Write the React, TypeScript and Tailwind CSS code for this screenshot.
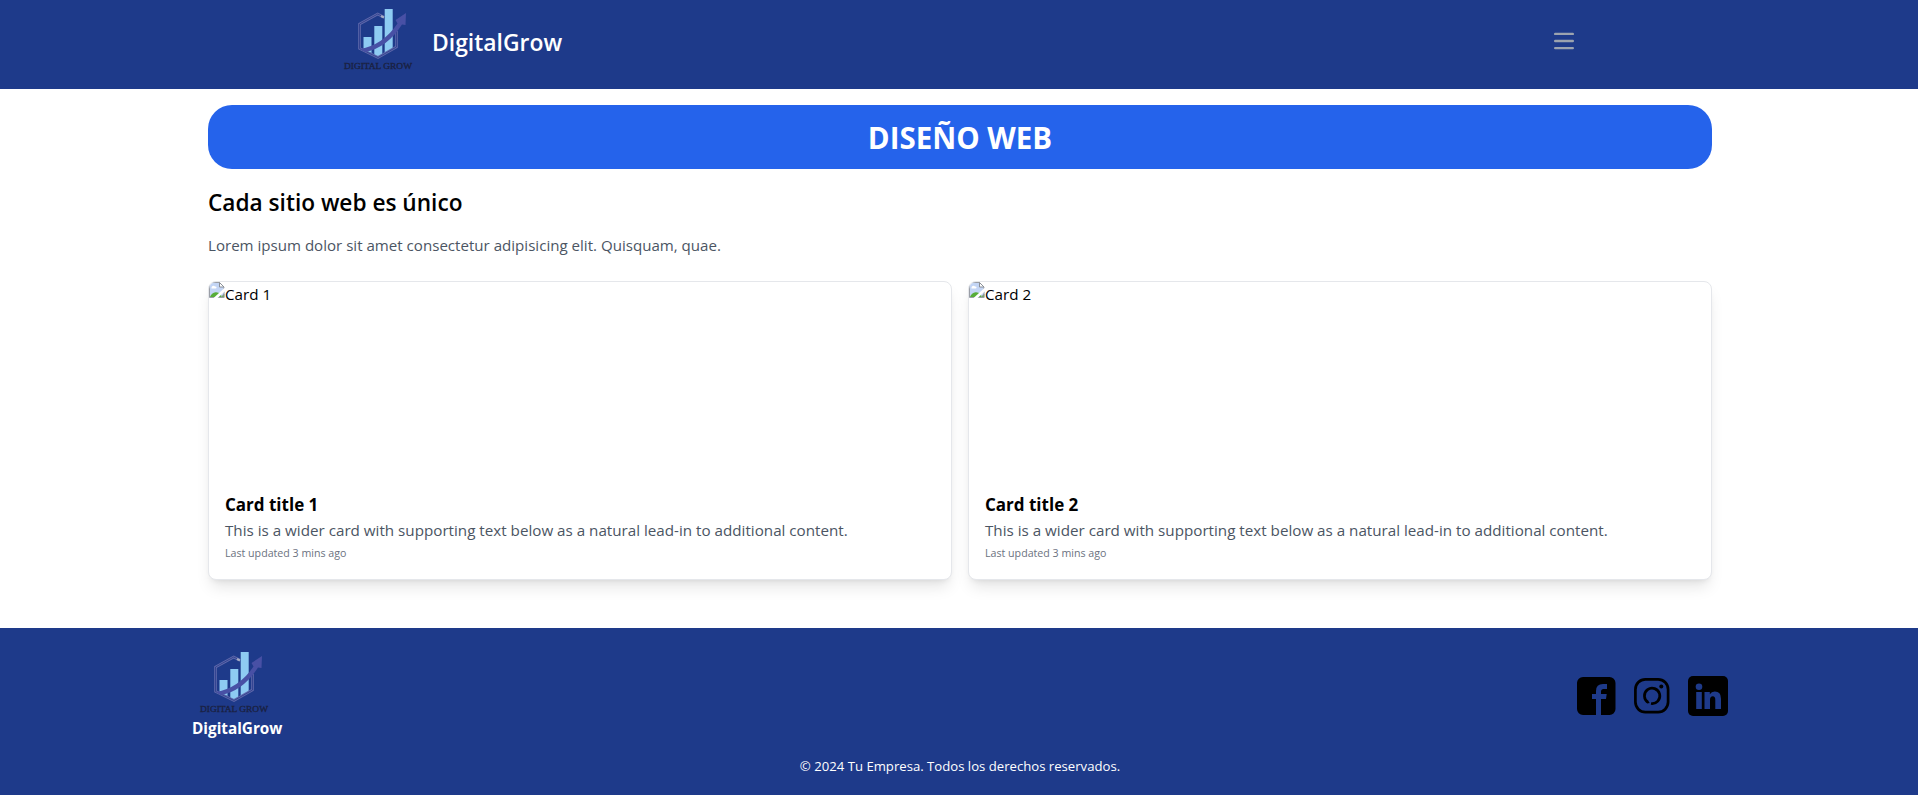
function Logo() {
  return (
    <svg className="block h-16 w-20" viewBox="0 0 80 64" fill="none">
      <path d="M23.500 28h8v16l-2-.5-6-3z M34.300 17h8v29.500l-4 2-4-2z M44.700 0h8v39.500l-8 4.500z" fill="#8ecbf2" />
      <path d="M43.500 8 L37.700 5 L19.500 15 V39.500 L38 48.500 L56.500 38 V22" stroke="#5f69ab" strokeWidth="2.600" />
      <path d="M43.500 8 L37.700 5 L19.500 15 V39.500 L38 48.500 L56.500 38 V22" stroke="#2a3b8c" strokeWidth="0.8" />
      <path d="M41 7l3 1.500" stroke="#a7adc6" strokeWidth="2" />
      <path d="M20 40 Q43 36 57.500 14.500 L55.500 11 L66 4 L65.500 16 L62 15.500 Q47 39 25 43 Z" fill="#4850a5" />
      <text x="4" y="59.700" textLength="68" lengthAdjust="spacingAndGlyphs" fontSize="8.800" fill="#1a2142" stroke="#1a2142" strokeWidth="0.35" fontFamily="Liberation Serif, serif">DIGITAL GROW</text>
    </svg>
  );
}

function BrokenImage() {
  return (
    <svg className="block h-4 w-4 shrink-0" viewBox="0 0 16 16">
      <path d="M.5 .5H10.500l4.500 4.500V15.500H.5z" fill="#c3d5f5" stroke="#9a9ea6" />
      <path d="M2.500 6c0-2 2.500-3 3.500-1.500 2-.5 2 2 .5 2h-4z" fill="#fff" />
      <path d="M1 15c1-3 4-5.500 7-4.500 2 0 4 2 5 4.500z" fill="#57ad38" />
      <path d="M10.500 .5V5h4.500z" fill="#fff" stroke="#8b9098" />
      <path d="M5.500 17L17 6.500" stroke="#fff" strokeWidth="2.800" />
      <path d="M12 15.500h3V12z" fill="#57ad38" stroke="#9a9ea6" />
    </svg>
  );
}

function FacebookIcon() {
  return (
    <svg className="h-10 w-10" viewBox="0 0 40 40">
      <path fill="#000" d="M7 1H33.500A6 6 0 0 1 39.500 7V33A6 6 0 0 1 33.500 39H25V23H30L30.700 18H25V15.500Q25 13 27.500 13H31V8H27Q20 8 20 15V18H16V23H20V39H7A6 6 0 0 1 1 33V7A6 6 0 0 1 7 1Z" />
    </svg>
  );
}

function InstagramIcon() {
  return (
    <svg className="h-10 w-10" viewBox="0 0 40 40" fill="none" stroke="#000">
      <rect x="3.400" y="3.400" width="32.700" height="32.700" rx="10" strokeWidth="2.700" />
      <path d="M16.200 26.500A7.700 7.700 0 1 1 19 27.500" strokeWidth="2.700" />
      <path d="M14.800 25.500l2.500 1.500" strokeWidth="1.200" />
      <circle cx="29.300" cy="10.500" r="2" fill="#000" stroke="none" />
    </svg>
  );
}

function LinkedinIcon() {
  return (
    <svg className="h-10 w-10" viewBox="0 0 40 40">
      <rect width="40" height="40" rx="5" fill="#000" />
      <g fill="#1e3a8a">
        <circle cx="11" cy="10.700" r="3.300" />
        <path d="M8.200 16h5.600v17H8.200z M16.500 16h5.300v2.200Q23.400 15.600 26.800 15.600Q33 15.600 33 22.700V33H27.300V24Q27.300 20.300 24.800 20.300Q22 20.300 22 24V33H16.500z" />
      </g>
    </svg>
  );
}

function Card({ n }: { n: number }) {
  return (
    <article className="h-[299px] overflow-hidden rounded-lg border border-[#e5e7eb] bg-white shadow-lg">
      <div className="flex h-48 items-start">
        <BrokenImage />
        <span className="text-[15.2px] leading-6">Card {n}</span>
      </div>
      <div className="p-4">
        <h5 className="h-7 pt-px text-[17px] leading-7 font-bold">Card title {n}</h5>
        <p className="text-[15.2px] leading-6 text-[#4b5563]">This is a wider card with supporting text below as a natural lead-in to additional content.</p>
        <small className="block pt-px text-[10.65px] leading-5 text-[#6b7280]">Last updated 3 mins ago</small>
      </div>
    </article>
  );
}

export default function App() {
  return (
    <div className="w-full overflow-hidden">
      <div className="flex h-[795px] w-[1920px] flex-col bg-white font-['Open_Sans',sans-serif] text-base text-black">
        <header className="h-[89px] bg-[#1e3a8a] pt-px">
          <div className="mx-auto flex h-20 w-[1240px] items-center justify-between pr-1.5">
            <div className="flex items-center gap-3">
              <Logo />
              <span className="pt-[3px] text-[22.9px] leading-8 font-semibold text-white">DigitalGrow</span>
            </div>
            <svg className="h-5 w-5" viewBox="0 0 17 14" fill="none" stroke="#9ca3af" strokeWidth="2" strokeLinecap="round"><path d="M1 1h15M1 7h15M1 13h15" /></svg>
          </div>
        </header>
        <main className="mx-auto w-[1536px] flex-1 p-4">
          <h1 className="flex h-16 items-center justify-center rounded-3xl bg-[#2563eb] pt-0.5 text-[29.5px] leading-9 font-bold text-white">DISEÑO WEB</h1>
          <h2 className="mt-4 h-8 pt-0.5 text-[22.65px] leading-8 font-semibold">Cada sitio web es único</h2>
          <p className="mt-4 h-6 text-[15.1px] leading-6 text-[#4b5563]">Lorem ipsum dolor sit amet consectetur adipisicing elit. Quisquam, quae.</p>
          <div className="mt-6 grid grid-cols-2 gap-4"><Card n={1} /><Card n={2} /></div>
        </main>
        <footer className="h-[167px] bg-[#1e3a8a] pt-6 text-white">
          <div className="mx-auto flex h-[104px] w-[1536px] items-start justify-between">
            <div>
              <div className="pl-1"><Logo /></div>
              <p className="text-[15.3px] leading-6 font-bold">DigitalGrow</p>
            </div>
            <div className="flex gap-4 pt-6">
              <FacebookIcon />
              <InstagramIcon />
              <LinkedinIcon />
            </div>
          </div>
          <p className="text-center text-[13.15px] leading-5">© 2024 Tu Empresa. Todos los derechos reservados.</p>
        </footer>
      </div>
    </div>
  );
}
